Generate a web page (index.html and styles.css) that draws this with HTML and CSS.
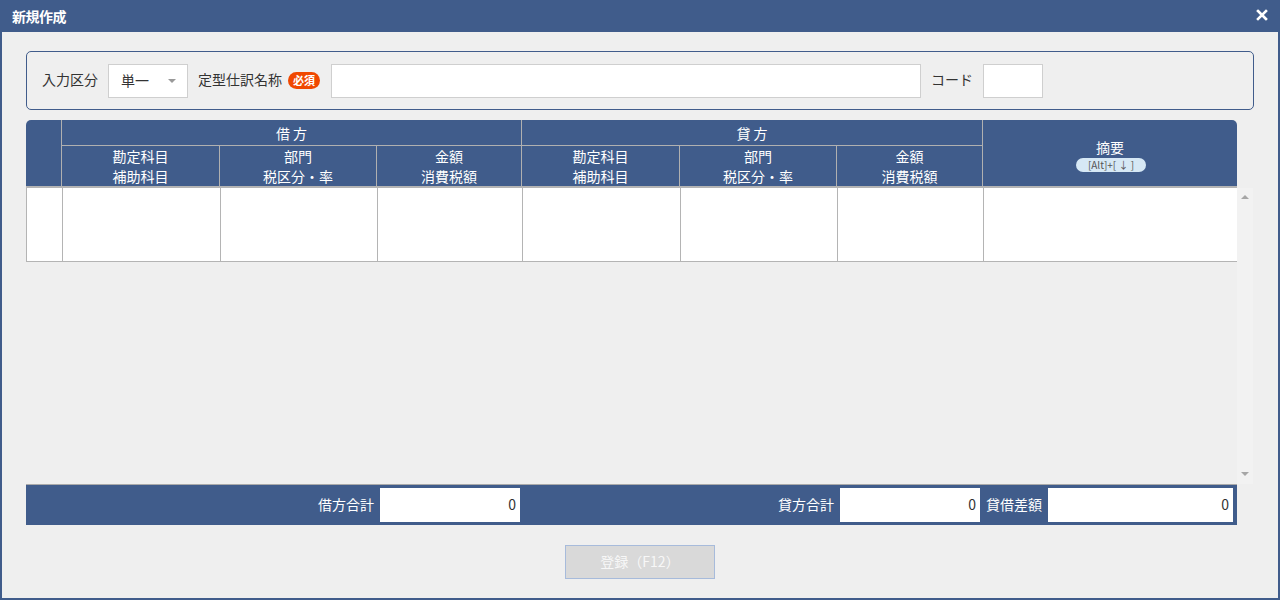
FILE: index.html
```html
<!DOCTYPE html>
<html lang="ja">
<head>
<meta charset="utf-8">
<link rel="stylesheet" href="styles.css">
</head>
<body>
<div class="window">
  <div class="titlebar">
    <span class="title">新規作成</span>
    <svg class="close" width="12" height="12" viewBox="0 0 12 12"><path d="M2 2 L10 10 M10 2 L2 10" stroke="#fff" stroke-width="2.6" stroke-linecap="square"/></svg>
  </div>
  <div class="content">
    <div class="filter">
      <span class="label">入力区分</span>
      <div class="select"><span>単一</span><span class="caret"></span></div>
      <span class="label">定型仕訳名称</span>
      <span class="badge">必須</span>
      <div class="input name"></div>
      <span class="label">コード</span>
      <div class="input code"></div>
    </div>
    <div class="table-area">
      <div class="thead">
        <div class="h corner"></div>
        <div class="h group g1">借 方</div>
        <div class="h group g2">貸 方</div>
        <div class="h summary">
          <span>摘要</span>
          <span class="kbd">[Alt]+[ ↓ ]</span>
        </div>
        <div class="h sub">勘定科目<br>補助科目</div>
        <div class="h sub">部門<br>税区分・率</div>
        <div class="h sub">金額<br>消費税額</div>
        <div class="h sub">勘定科目<br>補助科目</div>
        <div class="h sub">部門<br>税区分・率</div>
        <div class="h sub">金額<br>消費税額</div>
      </div>
      <div class="tbody-wrap">
        <div class="tbody">
          <div class="row">
            <div class="c"></div><div class="c"></div><div class="c"></div><div class="c"></div>
            <div class="c"></div><div class="c"></div><div class="c"></div><div class="c"></div>
          </div>
        </div>
        <div class="vscroll">
          <span class="arrow up"></span>
          <span class="arrow down"></span>
        </div>
      </div>
      <div class="tfoot">
        <div class="fsec f1"><span class="flabel">借方合計</span><div class="fval w140">0</div></div>
        <div class="fsec f2"><span class="flabel">貸方合計</span><div class="fval w140">0</div></div>
        <div class="fsec f3"><span class="flabel">貸借差額</span><div class="fval w185">0</div></div>
      </div>
    </div>
    <div class="actions">
      <button class="btn">登録（F12）</button>
    </div>
  </div>
</div>
</body>
</html>
```

FILE: styles.css
```css
* { box-sizing: border-box; }
html, body { margin: 0; padding: 0; }
body {
  width: 1280px;
  height: 600px;
  font-family: "Noto Sans CJK JP", "Noto Sans", sans-serif;
  font-size: 14px;
  color: #333;
  background: #efefef;
  overflow: hidden;
}
.window {
  width: 1280px;
  height: 600px;
  display: flex;
  flex-direction: column;
}
.titlebar {
  height: 32px;
  background: #405c8b;
  display: flex;
  align-items: center;
  justify-content: space-between;
  padding: 0 12px 0 12px;
  color: #fff;
}
.title { font-weight: bold; font-size: 14px; letter-spacing: -0.5px; }
.close { margin-top: -2px; }
.content {
  flex: 1;
  border: 2px solid #405c8b;
  border-top: none;
  background: #efefef;
  padding: 19px 24px 19px 24px;
  display: flex;
  flex-direction: column;
}
.filter {
  height: 59px;
  border: 1px solid #405c8b;
  border-radius: 5px;
  display: flex;
  align-items: center;
  padding: 0 15px;
}
.label { margin-right: 10px; white-space: nowrap; padding-bottom: 3px; }
.select {
  width: 80px;
  height: 34px;
  background: #fff;
  border: 1px solid #cfcfcf;
  display: flex;
  align-items: center;
  justify-content: space-between;
  padding: 0 11px 2px 12px;
  margin-right: 10px;
}
.caret {
  width: 0; height: 0;
  border-left: 4px solid transparent;
  border-right: 4px solid transparent;
  border-top: 4px solid #999;
  margin-top: 2px;
}
.badge {
  background: #f04800;
  color: #fff;
  font-size: 11px;
  font-weight: bold;
  height: 17px;
  line-height: 17px;
  padding: 0 5px;
  border-radius: 9px;
  margin-left: -4px;
  margin-right: 11px;
}
.input {
  height: 34px;
  background: #fff;
  border: 1px solid #cfcfcf;
}
.input.name { width: 590px; margin-right: 10px; }
.input.code { width: 60px; }

.table-area {
  margin-top: 10px;
  flex: 1;
  display: flex;
  flex-direction: column;
}
.thead {
  width: 1211px;
  height: 68px;
  display: grid;
  grid-template-columns: 36px 158px 157px 145px 158px 157px 146px 254px;
  grid-template-rows: 26px 40px;
  background: #405c8b;
  border-radius: 5px 5px 0 0;
  border-bottom: 2px solid #b4b4b4;
  color: #fff;
}
.h {
  display: flex;
  align-items: center;
  justify-content: center;
  text-align: center;
  line-height: 20px;
  border-right: 1px solid #b0b0b0;
}
.corner { grid-row: 1 / 3; grid-column: 1; border-radius: 5px 0 0 0; }
.group { grid-row: 1; border-bottom: 1px solid #b0b0b0; }
.g1 { grid-column: 2 / 5; }
.g2 { grid-column: 5 / 8; }
.summary {
  grid-row: 1 / 3;
  grid-column: 8;
  border-right: none;
  flex-direction: column;
  padding-top: 2px;
}
.kbd {
  background: #d6e8f5;
  color: #555;
  font-size: 10px;
  line-height: 14px;
  height: 14px;
  width: 70px;
  border-radius: 7px;
  margin-top: 1px;
  margin-left: 2px;
}
.sub { grid-row: 2; }

.tbody-wrap {
  flex: 1;
  display: flex;
}
.tbody { width: 1211px; }
.row {
  display: grid;
  grid-template-columns: 36px 158px 157px 145px 158px 157px 146px 254px;
  height: 74px;
  border-left: 1px solid #b4b4b4;
  border-bottom: 1px solid #b4b4b4;
}
.c { background: #fff; border-right: 1px solid #b4b4b4; }
.vscroll {
  width: 16px;
  background: #f2f2f2;
  display: flex;
  flex-direction: column;
  justify-content: space-between;
  align-items: center;
  padding: 7px 0 8px;
}
.arrow { width: 0; height: 0; border-left: 4px solid transparent; border-right: 4px solid transparent; }
.up { border-bottom: 4px solid #a6a6a6; }
.down { border-top: 4px solid #a6a6a6; }

.tfoot {
  width: 1211px;
  height: 41px;
  border-top: 1px solid #aaa;
  background: #405c8b;
  display: grid;
  grid-template-columns: 496px 461px 254px;
  color: #fff;
}
.fsec { display: flex; align-items: center; }
.f1 { justify-content: flex-end; padding-right: 2px; }
.f2 { justify-content: flex-end; padding-right: 3px; }
.f3 { padding-left: 3px; }
.flabel { margin-right: 6px; white-space: nowrap; padding-bottom: 2px; }
.fval {
  height: 34px;
  background: #fff;
  color: #333;
  text-align: right;
  line-height: 32px;
  padding-right: 4px;
}
.w140 { width: 140px; }
.w185 { width: 185px; }

.actions {
  margin-top: 20px;
  display: flex;
  justify-content: center;
}
.btn {
  width: 150px;
  height: 34px;
  background: #d9d9d9;
  border: 1px solid #a7bbdb;
  color: #f7f7f7;
  font-family: "Noto Sans CJK JP", sans-serif;
  font-size: 14px;
  padding: 0 0 2px;
  margin-left: 0;
}
```
